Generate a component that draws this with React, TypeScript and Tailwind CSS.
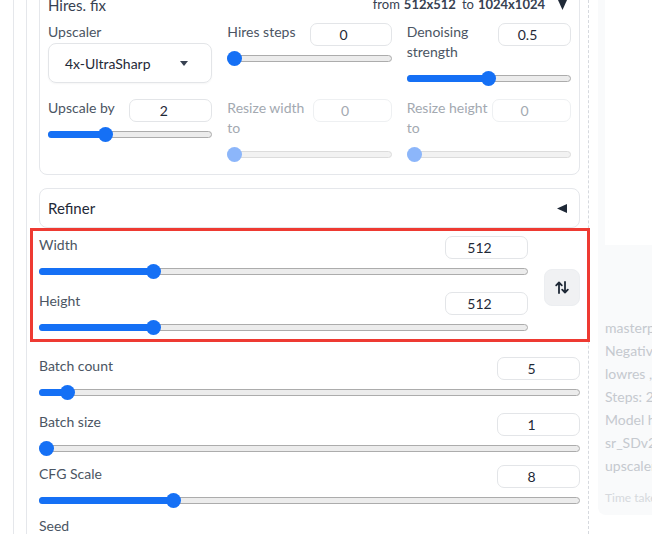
import React from "react";

type TrackProps = {
  v: number;
  min: number;
  max: number;
  disabled?: boolean;
};

const Track = ({ v, min, max, disabled }: TrackProps) => {
  const pct = (v - min) / (max - min);
  return (
    <div className="relative flex h-[24px] items-center">
      <div
        className={
          disabled
            ? "h-[7px] w-full rounded-full border border-[#dcdcdc] bg-[#f2f2f2]"
            : "h-[7px] w-full rounded-full border border-[#acacac] bg-[#ececec]"
        }
      />
      {pct > 0 && (
        <div
          className="absolute left-0 h-[7px] rounded-full bg-[#1570f5]"
          style={{ width: `calc(7.5px + (100% - 15px) * ${pct})` }}
        />
      )}
      <div
        className={
          disabled
            ? "absolute h-[15px] w-[15px] rounded-full bg-[#8cb6fa]"
            : "absolute h-[15px] w-[15px] rounded-full bg-[#1570f5]"
        }
        style={{ left: `calc((100% - 15px) * ${pct})` }}
      />
    </div>
  );
};

type FieldProps = {
  label: string;
  value: string;
  inputClass: string;
  v: number;
  min: number;
  max: number;
  disabled?: boolean;
};

const Field = ({ label, value, inputClass, v, min, max, disabled }: FieldProps) => (
  <div>
    <div className="flex items-start justify-between gap-[4px]">
      <div
        className={
          disabled
            ? "pb-[4px] leading-[20px] text-[#a3a9b1]"
            : "pb-[4px] leading-[20px] text-[#4b5563]"
        }
      >
        {label}
      </div>
      <div
        className={`${inputClass} mt-[1px] flex h-[23px] shrink-0 items-center justify-center rounded-[7px] border pr-[14px] ${
          disabled ? "border-[#eef0f2] text-[#a3a9b1]" : "border-[#e3e5e8] text-[#1f2937]"
        }`}
      >
        {value}
      </div>
    </div>
    <Track v={v} min={min} max={max} disabled={disabled} />
  </div>
);

const infoLines = [
  "masterpiece, best quality, 1girl, solo",
  "Negative prompt: worst quality, low quality",
  "lowres , bad anatomy, bad hands",
  "Steps: 20, Sampler: DPM++ 2M Karras",
  "Model hash: 6ce0161689",
  "sr_SDv2, Denoising strength: 0.5",
  "upscaler: 4x-UltraSharp",
];

export default function App() {
  return (
    <div className="flex h-[534px] w-[652px] overflow-hidden bg-white font-['Lato',sans-serif] text-[14px] text-[#4b5563]">
      <div className="w-[14px] shrink-0 border-r border-[#e5e7eb]" />
      <div className="w-[13px] shrink-0 border-r border-[#e5e7eb]" />

      <main className="w-[562px] shrink-0 border-r border-dashed border-[#d6d9de] pl-[12px] pr-[8px]">
        {/* Hires. fix */}
        <section className="-mt-[14px] rounded-lg border border-[#e5e7eb] px-[8px] pb-[8px] pt-[8px]">
          <div className="flex h-[20px] items-center justify-between">
            <span className="text-[15px] text-[#374151]">Hires. fix</span>
            <span className="flex items-center text-[13px] text-[#374151]">
              from <b className="ml-[4px] font-bold">512x512</b>
              <span className="ml-[6px]">to</span>
              <b className="ml-[4px] font-bold">1024x1024</b>
              <svg width="9" height="10" viewBox="0 0 9 10" className="ml-[13px] mr-[4px]">
                <path d="M0 0 H9 L4.5 10 Z" fill="#1f2937" />
              </svg>
            </span>
          </div>

          <div className="mt-[7px] grid grid-cols-3 gap-x-[15px] gap-y-[8px]">
            <div>
              <div className="h-[20px] leading-[20px]">Upscaler</div>
              <div className="mt-[1px] flex h-[40px] items-center justify-between rounded-lg border border-[#e3e5e8] pl-[16px] pr-[23px] text-[#1f2937] shadow-[0_1px_2px_rgba(0,0,0,0.04)]">
                <span>4x-UltraSharp</span>
                <svg width="8" height="5" viewBox="0 0 8 5">
                  <path d="M0 0 H8 L4 5 Z" fill="#374151" />
                </svg>
              </div>
            </div>
            <Field label="Hires steps" value="0" inputClass="w-[82px]" v={0} min={0} max={150} />
            <Field label="Denoising strength" value="0.5" inputClass="w-[73px]" v={0.5} min={0} max={1} />
            <Field label="Upscale by" value="2" inputClass="w-[83px]" v={2} min={1} max={4} />
            <Field label="Resize width to" value="0" inputClass="w-[79px]" v={0} min={0} max={2048} disabled />
            <Field label="Resize height to" value="0" inputClass="w-[79px]" v={0} min={0} max={2048} disabled />
          </div>
        </section>

        {/* Refiner */}
        <section className="mt-[13px] flex h-[40px] items-center justify-between rounded-lg border border-[#e5e7eb] pl-[8px] pr-[12px]">
          <span className="text-[15px] text-[#1f2937]">Refiner</span>
          <svg width="10" height="9" viewBox="0 0 10 9">
            <path d="M10 0 V9 L0 4.5 Z" fill="#1f2937" />
          </svg>
        </section>

        {/* Width / Height */}
        <section className="-ml-[9px] -mr-[10px] flex items-center gap-[16px] border-[3px] border-[#ee3a32] pb-0 pl-[6px] pr-[7px] pt-[4px]">
          <div className="flex-1">
            <Field label="Width" value="512" inputClass="w-[83px]" v={512} min={64} max={2048} />
            <div className="mt-[8px]">
              <Field label="Height" value="512" inputClass="w-[83px]" v={512} min={64} max={2048} />
            </div>
          </div>
          <button className="flex h-[37px] w-[36px] items-center justify-center rounded-lg border border-[#eceef1] bg-[#f0f1f3]">
            <svg width="14" height="13" viewBox="0 0 14 13" fill="none" stroke="#1f2937" strokeWidth="1.8" strokeLinecap="round" strokeLinejoin="round">
              <path d="M4 12 V1.5 M1.2 4.3 L4 1.5 L6.8 4.3" />
              <path d="M10 1 V11.5 M7.2 8.7 L10 11.5 L12.8 8.7" />
            </svg>
          </button>
        </section>

        <div className="mt-[14px]">
          <Field label="Batch count" value="5" inputClass="w-[83px]" v={5} min={1} max={100} />
        </div>
        <div className="mt-[8px]">
          <Field label="Batch size" value="1" inputClass="w-[83px]" v={1} min={1} max={8} />
        </div>
        <div className="mt-[4px]">
          <Field label="CFG Scale" value="8" inputClass="w-[83px]" v={8} min={1} max={30} />
        </div>
        <div className="mt-[4px] leading-[20px]">Seed</div>
      </main>

      <aside className="ml-[9px] flex h-[515px] min-w-0 flex-1 flex-col overflow-hidden rounded-bl-lg bg-[#f9fafb] pl-[7px]">
        <div className="h-[245px] shrink-0 bg-white" />
        <div className="mt-[71px] whitespace-nowrap text-[14px] leading-[23px] text-[#c5c9cf]">
          {infoLines.map((line) => (
            <div key={line}>{line}</div>
          ))}
        </div>
        <div className="mt-[12px] whitespace-nowrap text-[12px] leading-[18px] text-[#d6d9dd]">
          Time taken: 41.2 sec.
        </div>
      </aside>
    </div>
  );
}
